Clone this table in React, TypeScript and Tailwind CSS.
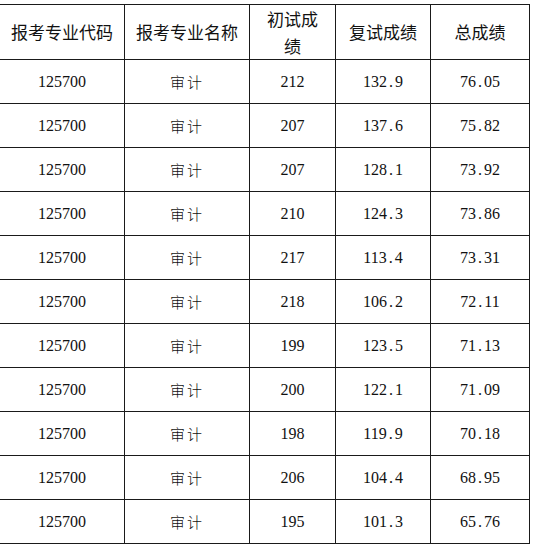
const rows = [
  ['125700', '审计', '212', '132.9', '76.05'],
  ['125700', '审计', '207', '137.6', '75.82'],
  ['125700', '审计', '207', '128.1', '73.92'],
  ['125700', '审计', '210', '124.3', '73.86'],
  ['125700', '审计', '217', '113.4', '73.31'],
  ['125700', '审计', '218', '106.2', '72.11'],
  ['125700', '审计', '199', '123.5', '71.13'],
  ['125700', '审计', '200', '122.1', '71.09'],
  ['125700', '审计', '198', '119.9', '70.18'],
  ['125700', '审计', '206', '104.4', '68.95'],
  ['125700', '审计', '195', '101.3', '65.76'],
]

const cjk = { fontFamily: '"Noto Sans CJK SC", sans-serif' }
const num = { fontFamily: '"Liberation Serif", "Noto Sans CJK SC", serif' }

// SimSun-like numbers: the dot takes a full half-width slot
function Num({ value }: { value: string }) {
  return (
    <span style={num} className="text-[16px] text-[#111]">
      {value.split('').map((ch, i) =>
        ch === '.' ? (
          <span key={i} className="inline-block w-[8px] text-center">
            .
          </span>
        ) : (
          <span key={i}>{ch}</span>
        )
      )}
    </span>
  )
}

export default function App() {
  const th = 'border border-[#1a1a1a] text-center font-normal text-[17px] text-[#111] align-middle p-0'
  const td = 'border border-[#1a1a1a] text-center align-middle h-[44px] p-0'
  return (
    <div className="bg-white w-[536px] h-[550px] overflow-hidden pt-[4px]">
      <table className="table-fixed border-collapse ml-[-1px] w-[530px]">
        <colgroup>
          <col className="w-[125px]" />
          <col className="w-[125px]" />
          <col className="w-[86px]" />
          <col className="w-[95px]" />
          <col className="w-[99px]" />
        </colgroup>
        <thead>
          <tr className="h-[53px]" style={cjk}>
            <th className={th + ' h-[53px]'}>报考专业代码</th>
            <th className={th}>报考专业名称</th>
            <th className={th + ' leading-[27px] px-3'}>初试成绩</th>
            <th className={th}>复试成绩</th>
            <th className={th}>总成绩</th>
          </tr>
        </thead>
        <tbody>
          {rows.map((r, i) => (
            <tr key={i}>
              <td className={td}>
                <Num value={r[0]} />
              </td>
              <td className={td}>
                <span style={cjk} className="text-[15px] font-light tracking-[2px] text-[#111]">
                  {r[1]}
                </span>
              </td>
              <td className={td}>
                <Num value={r[2]} />
              </td>
              <td className={td}>
                <Num value={r[3]} />
              </td>
              <td className={td}>
                <Num value={r[4]} />
              </td>
            </tr>
          ))}
        </tbody>
      </table>
    </div>
  )
}
